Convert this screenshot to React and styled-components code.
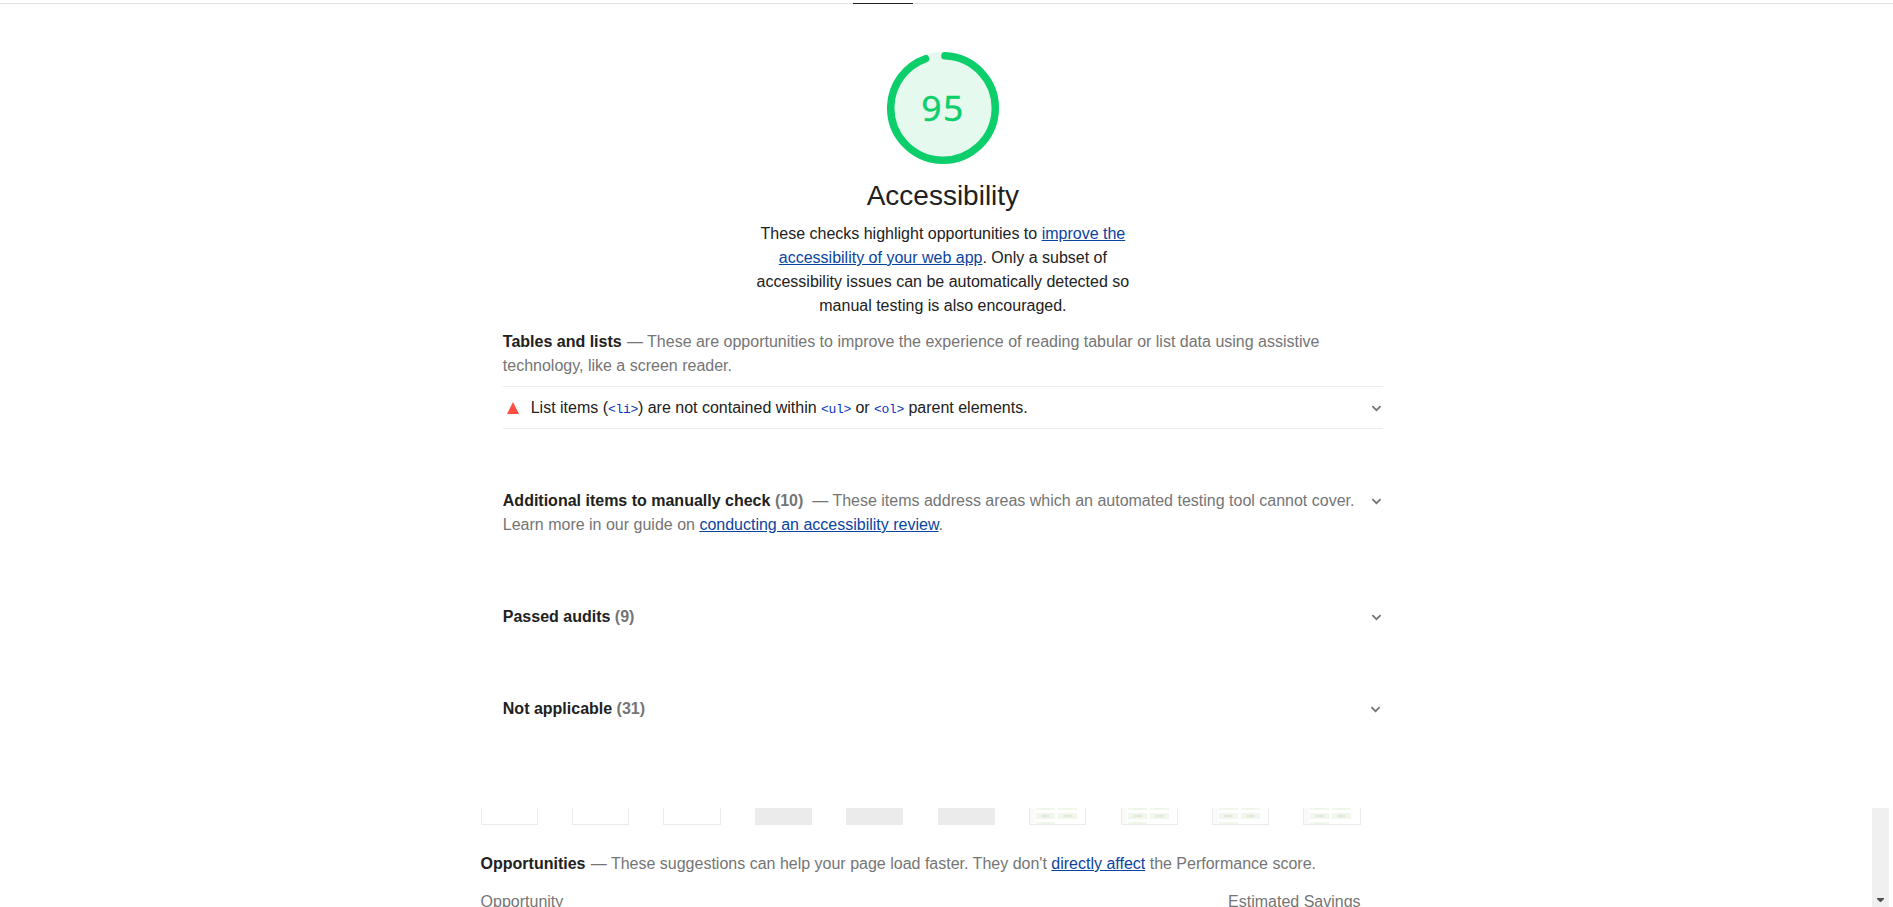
import React from 'react';
import styled, { createGlobalStyle } from 'styled-components';

const Global = createGlobalStyle`
  body { margin: 0; background: #fff; overflow: hidden; }
  * { box-sizing: border-box; }
`;
const Page = styled.div`
  width: 1893px; height: 907px; overflow: hidden;
  display: flex; flex-direction: column;
  font: 16px/24px "Liberation Sans", Arial, sans-serif;
  color: #212121;
`;
const TabStrip = styled.div`
  height: 4px; flex: none; padding: 3px 0 0 853px; background: linear-gradient(#fff 3px, #e0e0e0 3px);
`;
const ActiveTab = styled.div`width: 60px; height: 1px; background: #212121;`;
const Category = styled.main`
  height: 804px; flex: none; width: 880.2px; margin-left: 502.8px; padding-top: 48px;
  display: flex; flex-direction: column;
`;
const Score = styled.header`
  display: flex; flex-direction: column; align-items: center; text-align: center;
`;
const Gauge = styled.svg`width: 112px; height: 112px; display: block;`;
const Title = styled.h1`
  margin: 15px 0 0; font-size: 28px; line-height: 34px; font-weight: 400; height: 43px;
`;
const Description = styled.p`margin: 0; width: 380px;`;
const Link = styled.a`color: #0b43a0; text-decoration: underline;`;
const Group = styled.p`margin: ${p => p.$top || 0}px 0 0; color: #757575;`;
const Strong = styled.b`color: #212121; margin-right: ${p => (p.$lead ? 0.8 : 0)}px;`;
const Audit = styled.div`
  display: flex; align-items: center; height: 43px; margin-top: 8px; padding: 0 2px 0 4.5px;
  border: solid #ebebeb; border-width: 1px 0;
`;
const FailMark = styled.svg`width: 12px; height: 12px; margin: 1px 11.4px 0 0;`;
const Grow = styled.div`flex: 1;`;
const Code = styled.code`
  font: 13px/16px "Liberation Mono", monospace; letter-spacing: -0.34px; color: #0938c2;
`;
const Clump = styled.section`
  display: flex; justify-content: space-between; align-items: flex-start;
  margin-top: ${p => p.$top}px; padding-right: ${p => p.$right || 1.5}px; color: #757575;
`;
const ClumpText = styled.div`width: 860px;`;
const Chevron = styled.svg`width: 9px; height: 7px; flex: none; margin-top: ${p => p.$top || 0}px;`;
const Lower = styled.div`
  height: 99px; flex: none; display: flex; justify-content: space-between; padding: 0 4px 0 480.6px; color: #757575;
`;
const Performance = styled.section`width: 880px;`;
const Filmstrip = styled.div`display: flex; justify-content: space-between; height: 17px;`;
const Frame = styled.div`
  width: 57.2px; height: 17px; border: solid #ebebeb; border-width: 0 1px 1px;
  background: ${p => (p.$filled ? '#ebebeb' : '#fff')}; overflow: hidden;
`;
const Thumb = styled.svg`display: block; width: 55px; height: 16px;`;
const Columns = styled.div`display: flex; justify-content: space-between; margin-top: 14px;`;
const Scrollbar = styled.div`
  width: 17px; background: #f0f0f0; display: flex; align-items: flex-end; justify-content: center; padding-bottom: 5px;
`;
const Arrow = styled.svg`width: 7px; height: 4px;`;

const Down = ({ $top }) => (
  <Chevron $top={$top} viewBox="0 0 9 7"><path d="M.4 1.2 4.5 5.2 8.6 1.2" fill="none" stroke="#757575" strokeWidth="1.7" /></Chevron>
);

const Preview = () => (
  <Thumb viewBox="0 0 55 16">
    <rect width="5" height="16" fill="#fafafa" />
    {[[6, -4], [28, -4], [6, 5], [28, 5], [6, 14]].map(([x, y]) => (
      <g key={`${x}${y}`}>
        <rect x={x} y={y} width="19" height="6" rx=".5" fill="#f1f7eb" />
        <path d={`M${x + 5.5} ${y + 3}h8`} stroke="#dfe6d9" strokeWidth="2.4" strokeDasharray="1.7 .4" />
      </g>
    ))}
  </Thumb>
);

export default function App() {
  const arc = 2 * Math.PI * 56;
  return (
    <Page>
      <Global />
      <TabStrip><ActiveTab /></TabStrip>
      <Category>
        <Score>
          <Gauge viewBox="0 0 120 120">
            <circle cx="60" cy="60" r="60" fill="#e6f9ef" />
            <circle cx="60" cy="60" r="56" fill="none" stroke="#0cce6b" strokeWidth="8" strokeLinecap="round"
              strokeDasharray={`${arc * 0.95 - 4} ${arc}`} transform="rotate(-87.9 60 60)" />
            <text x="60" y="74" textAnchor="middle" fontFamily="Noto Sans, sans-serif" fontSize="38" letterSpacing="1.6" fill="#0cce6b" stroke="#0cce6b" strokeWidth=".4">95</text>
          </Gauge>
          <Title>Accessibility</Title>
          <Description>
            These checks highlight opportunities to <Link>improve the accessibility of your web app</Link>. Only a subset of
            accessibility issues can be automatically detected so manual testing is also encouraged.
          </Description>
        </Score>
        <Group $top={12}>
          <Strong $lead>Tables and lists</Strong> — These are opportunities to improve the experience of reading tabular or list data
          using assistive technology, like a screen reader.
        </Group>
        <Audit>
          <FailMark viewBox="0 0 12 12"><path d="M6 0 12 12H0z" fill="#ff4e42" /></FailMark>
          <Grow>
            List items (<Code>&lt;li&gt;</Code>) are not contained within <Code>&lt;ul&gt;</Code> or <Code>&lt;ol&gt;</Code> parent elements.
          </Grow>
          <Down $top={2} />
        </Audit>
        <Clump $top={60}>
          <ClumpText>
            <Strong>Additional items to manually check</Strong> <b>(10)</b>&nbsp; — These items address areas which an automated
            testing tool cannot cover. Learn more in our guide on <Link>conducting an accessibility review</Link>.
          </ClumpText>
          <Down $top={9} />
        </Clump>
        <Clump $top={68}>
          <ClumpText><Strong>Passed audits</Strong> <b>(9)</b></ClumpText>
          <Down $top={9} />
        </Clump>
        <Clump $top={68} $right={2.5}>
          <ClumpText><Strong>Not applicable</Strong> <b>(31)</b></ClumpText>
          <Down $top={9} />
        </Clump>
      </Category>
      <Lower>
        <Performance>
          <Filmstrip>
            {Array.from({ length: 10 }, (_, i) => (
              <Frame key={i} $filled={i > 2 && i < 6}>{i > 5 && <Preview />}</Frame>
            ))}
          </Filmstrip>
          <Group $top={27}>
            <Strong $lead>Opportunities</Strong> — These suggestions can help your page load faster. They don't <Link>directly affect</Link> the Performance score.
          </Group>
          <Columns><span>Opportunity</span><span>Estimated Savings</span></Columns>
        </Performance>
        <Scrollbar><Arrow viewBox="0 0 7 4"><path d="M0 0H7V1L4 4H3L0 1z" fill="#505050" /></Arrow></Scrollbar>
      </Lower>
    </Page>
  );
}
